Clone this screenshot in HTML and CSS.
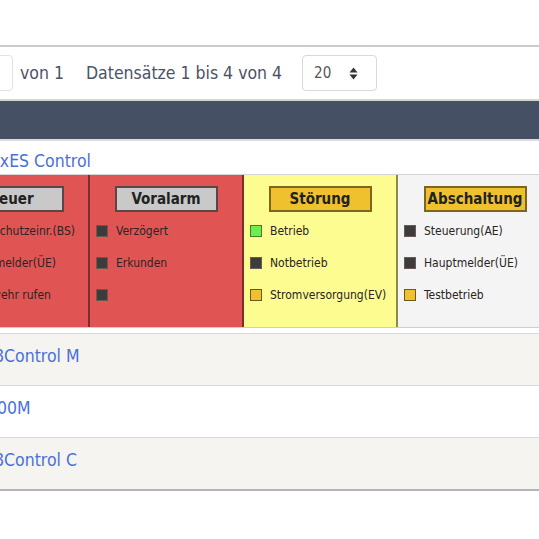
FILE: index.html
```html
<!DOCTYPE html>
<html>
<head>
    <link rel="stylesheet" href="styles.css">
</head>
<body>
<div class="page">
    <div class="grid">
        <div class="grid-toolbar">
            <div class="pager-input"></div>
            <span class="pager-total">von 1</span>
            <span class="pager-info">Datensätze 1 bis 4 von 4</span>
            <div class="page-size">
                <span>20</span>
                <svg class="page-size__arrows" width="9" height="13" viewBox="0 0 9 13">
                    <path d="M4.5 0.5 L8.5 5.5 L0.5 5.5 Z" fill="#333"/>
                    <path d="M4.5 12.5 L8.5 7.5 L0.5 7.5 Z" fill="#333"/>
                </svg>
            </div>
        </div>

        <div class="grid-header"></div>

        <div class="grid-row grid-row--open">
            <a class="device-link">FlexES Control</a>
        </div>

        <div class="status-panels">
            <div class="status-panel status-panel--red">
                <div class="status-panel__title">Feuer</div>
                <div class="indicator"><span class="led led--off"></span>Brandschutzeinr.(BS)</div>
                <div class="indicator"><span class="led led--off"></span>Hauptmelder(ÜE)</div>
                <div class="indicator"><span class="led led--off"></span>Feuerwehr rufen</div>
            </div>
            <div class="status-panel status-panel--red">
                <div class="status-panel__title">Voralarm</div>
                <div class="indicator"><span class="led led--off"></span>Verzögert</div>
                <div class="indicator"><span class="led led--off"></span>Erkunden</div>
                <div class="indicator"><span class="led led--off"></span></div>
            </div>
            <div class="status-panel status-panel--yellow">
                <div class="status-panel__title status-panel__title--warn">Störung</div>
                <div class="indicator"><span class="led led--green"></span>Betrieb</div>
                <div class="indicator"><span class="led led--off"></span>Notbetrieb</div>
                <div class="indicator"><span class="led led--yellow"></span>Stromversorgung(EV)</div>
            </div>
            <div class="status-panel status-panel--grey">
                <div class="status-panel__title status-panel__title--warn">Abschaltung</div>
                <div class="indicator"><span class="led led--off"></span>Steuerung(AE)</div>
                <div class="indicator"><span class="led led--off"></span>Hauptmelder(ÜE)</div>
                <div class="indicator"><span class="led led--yellow"></span>Testbetrieb</div>
            </div>
        </div>

        <div class="grid-row grid-row--alt grid-row--first">
            <a class="device-link">IQ8Control M</a>
        </div>
        <div class="grid-row">
            <a class="device-link">8000M</a>
        </div>
        <div class="grid-row grid-row--alt grid-row--last">
            <a class="device-link">IQ8Control C</a>
        </div>
    </div>
</div>
</body>
</html>
```

FILE: styles.css
```css
html, body {
    margin: 0;
    background-color: #ffffff;
    overflow: hidden;
}

body {
    font-family: "DejaVu Sans Condensed", "Liberation Sans", sans-serif;
    font-stretch: condensed;
    color: #4b5366;
}

.page {
    margin-left: -64px;
    padding-top: 45px;
    width: 720px;
}

.grid {
    border-top: 2px solid #cacaca;
}

.grid-toolbar {
    display: flex;
    align-items: center;
    height: 52px;
    padding-left: 37px;
    border-bottom: 2px solid #d6d6d6;
    font-size: 17.5px;
}

.pager-input {
    width: 38px;
    height: 34px;
    border: 1px solid #e2e2e2;
    border-radius: 4px;
}

.pager-total {
    margin-left: 7px;
}

.pager-info {
    margin-left: 22px;
}

.page-size {
    display: flex;
    align-items: center;
    justify-content: space-between;
    box-sizing: border-box;
    width: 75px;
    height: 36px;
    margin-left: 20px;
    padding: 0 18px 0 11px;
    border: 1px solid #d9d9d9;
    border-radius: 4px;
    font-size: 15px;
    color: #555;
}

.grid-header {
    height: 38px;
    background-color: #465064;
    border-bottom: 2px solid #dcdcdc;
}

.grid-row {
    padding: 12px 0 19px 41px;
    font-size: 17.5px;
    line-height: 20px;
    border-bottom: 1px solid #d8d8d8;
    background-color: #ffffff;
}

.grid-row--open {
    padding-top: 10px;
    padding-bottom: 3px;
    border-bottom: 1px solid #d4d4d4;
}

.grid-row--first {
    border-top: 1px solid #d8d8d8;
}

.grid-row--alt {
    background-color: #f5f4f0;
}

.grid-row--last {
    border-bottom: 2px solid #b4b4b4;
}

.device-link {
    color: #4a70d8;
}

.status-panels {
    display: flex;
    border-bottom: 1px solid #cfcfcf;
    margin-bottom: 5px;
}

.status-panel {
    width: 154px;
    height: 152px;
    padding-top: 11px;
    box-sizing: border-box;
    border-right: 2px solid rgba(0, 0, 0, 0.45);
}

.status-panel--red {
    background-color: #e05454;
}

.status-panel--yellow {
    background-color: #fcfc90;
}

.status-panel--grey {
    background-color: #f4f4f4;
    border-right: none;
}

.status-panel__title {
    width: 103px;
    height: 26px;
    box-sizing: border-box;
    margin: 0 auto 3px;
    border: 2px solid #5b4545;
    background-color: #c9c9c9;
    color: #222;
    font-size: 15px;
    font-weight: bold;
    line-height: 22px;
    text-align: center;
}

.status-panel__title--warn {
    background-color: #efc12f;
    border-color: #80661c;
}

.indicator {
    display: flex;
    align-items: center;
    height: 32px;
    padding-left: 6px;
    font-size: 12px;
    color: #2a2424;
}

.led {
    width: 12px;
    height: 12px;
    box-sizing: border-box;
    margin-right: 8px;
    border: 1px solid #6a5a50;
    flex-shrink: 0;
}

.led--off {
    background-color: #3c3c3c;
}

.led--green {
    background-color: #6cef4a;
    border-color: #4a7a30;
}

.led--yellow {
    background-color: #f0c030;
    border-color: #6a5a20;
}
```
